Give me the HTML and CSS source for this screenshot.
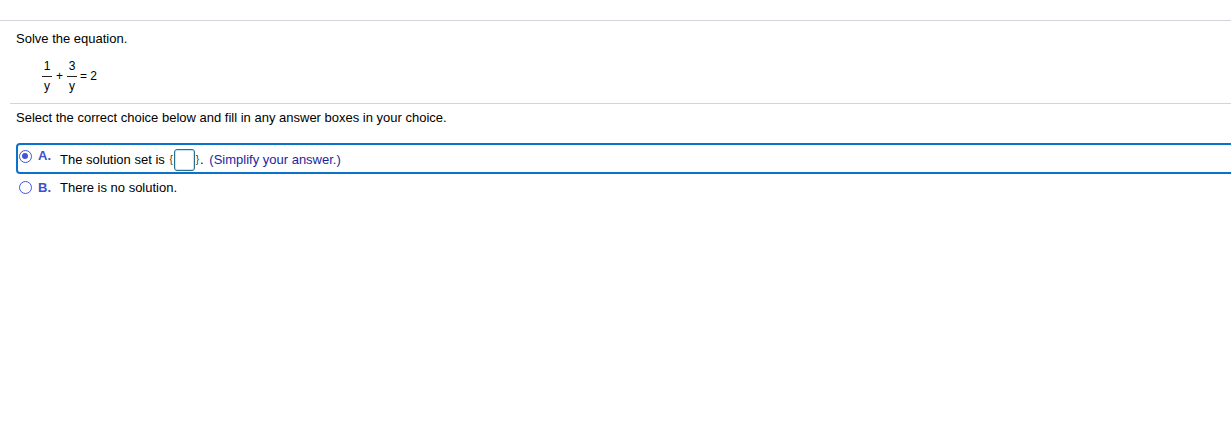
FILE: index.html
```html
<!DOCTYPE html>
<html>
<head>
<meta charset="utf-8">
<link rel="stylesheet" href="styles.css">
</head>
<body>
<div class="page">
  <div class="top-rule"></div>
  <div class="question">
    <p class="prompt">Solve the equation.</p>
    <div class="equation">
      <span class="frac"><span class="num">1</span><span class="den">y</span></span>
      <span class="op plus">+</span>
      <span class="frac"><span class="num">3</span><span class="den">y</span></span>
      <span class="op eq">= 2</span>
    </div>
  </div>
  <div class="rule"></div>
  <p class="instruction">Select the correct choice below and fill in any answer boxes in your choice.</p>
  <div class="choices">
    <div class="choice selected">
      <span class="radio on"></span>
      <span class="letter">A.</span>
      <span class="text">The solution set is <span class="brace">{</span><span class="answer-box"></span><span class="brace">}</span>. <span class="hint">(Simplify your answer.)</span></span>
    </div>
    <div class="choice plain">
      <span class="radio"></span>
      <span class="letter">B.</span>
      <span class="text">There is no solution.</span>
    </div>
  </div>
</div>
</body>
</html>
```

FILE: styles.css
```css
html, body {
  margin: 0;
  padding: 0;
  background: #ffffff;
}
body {
  font-family: "Liberation Sans", Arial, sans-serif;
  font-size: 13px;
  color: #000;
}
.page {
  padding-top: 20px;
  overflow: hidden;
}
.top-rule {
  height: 1px;
  background: #d4d4e0;
}
.question {
  padding: 10px 16px 0 16px;
}
.prompt {
  margin: 0;
  line-height: 15px;
}
.equation {
  display: flex;
  align-items: center;
  padding-left: 26px;
  margin-top: 14px;
  font-size: 12px;
}
.frac {
  display: inline-flex;
  flex-direction: column;
  align-items: center;
  width: 10px;
}
.num {
  display: block;
  width: 10px;
  text-align: center;
  line-height: 13px;
  padding-bottom: 3px;
  border-bottom: 1px solid #222;
}
.den {
  display: block;
  line-height: 13px;
  padding-top: 3px;
}
.op {
  line-height: 13px;
}
.plus {
  margin: 0 4px 0 4px;
}
.eq {
  margin-left: 3px;
}
.rule {
  height: 1px;
  background: #d4d4e0;
  margin: 10px 0 0 10px;
}
.instruction {
  margin: 6px 0 0 16px;
  line-height: 15px;
}
.choices {
  margin-top: 18px;
  padding-left: 16px;
}
.choice {
  display: flex;
  align-items: flex-start;
}
.choice.selected {
  height: 27px;
  margin-right: -10px;
  border: 2px solid #0a72cc;
  border-radius: 4px;
}
.choice.plain {
  height: 26px;
  align-items: center;
  padding-left: 2px;
}
.radio {
  flex: none;
  width: 13px;
  height: 13px;
  border: 1px solid #4355d6;
  border-radius: 50%;
  box-sizing: border-box;
  margin: 5px 6px 0 1px;
  position: relative;
  background: #fff;
}
.plain .radio {
  margin-top: 0;
}
.radio.on {
  border-width: 1.5px;
}
.radio.on::after {
  content: "";
  position: absolute;
  left: 2px;
  top: 2px;
  width: 6px;
  height: 6px;
  border-radius: 50%;
  background: #4355d6;
}
.letter {
  flex: none;
  color: #3f4fd0;
  font-weight: bold;
  width: 22px;
  line-height: 15px;
  margin-top: 3px;
}
.text {
  line-height: 15px;
  margin-top: 4px;
}
.plain .letter,
.plain .text {
  margin-top: 0;
}
.brace {
  font-size: 10px;
  vertical-align: 1px;
  padding: 0 1px;
  color: #333;
}
.answer-box {
  display: inline-block;
  width: 19px;
  height: 20px;
  vertical-align: -7px;
  border: 1px solid #2a6f8e;
  box-shadow: inset 0 0 0 1px #c2e4f3;
  border-radius: 3px;
}
.hint {
  color: #1e1ea0;
  margin-left: 2px;
}
```
